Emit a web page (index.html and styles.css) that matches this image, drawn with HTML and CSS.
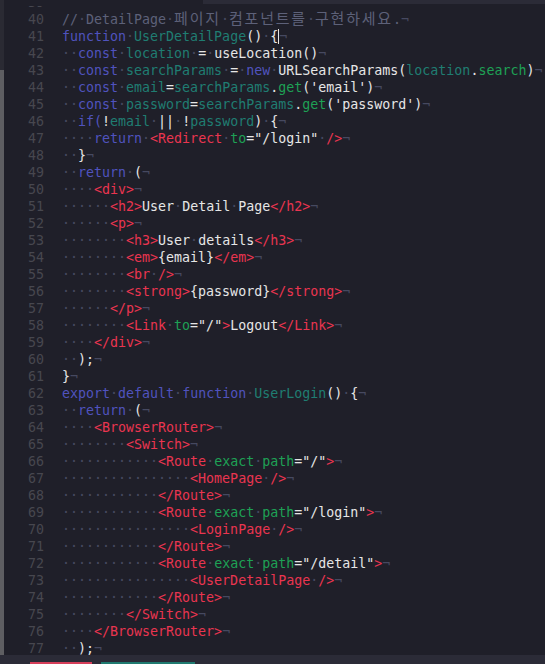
FILE: index.html
```html
<!DOCTYPE html>
<html lang="ko">
<head>
    <meta charset="UTF-8">
    <meta name="viewport" content="width=device-width, initial-scale=1.0">
    <title>UserLogin.js</title>
    <link rel="stylesheet" href="styles.css">
</head>
<body>
<div class="window">
    <div class="find-panel"></div>

    <div class="editor">
        <div class="scroll"><div class="thumb"></div></div>
        <div class="lines">
            <div class="row cut"><span class="no">39</span><span class="src"></span></div>
            <div class="row"><span class="no">40</span><span class="src"><span class="cm">//<i>·</i>DetailPage<i>·</i><span class="ko">페이지</span><i>·</i><span class="ko">컴포넌트를</span><i>·</i><span class="ko">구현하세요</span>.</span><i>¬</i></span></div>
            <div class="row"><span class="no">41</span><span class="src"><span class="kw">function</span><i>·</i><span class="fn">UserDetailPage</span>()<i>·</i>{<span class="caret"></span><i>¬</i></span></div>
            <div class="row"><span class="no">42</span><span class="src"><i>··</i><span class="kw">const</span><i>·</i><span class="fn">location</span><i>·</i>=<i>·</i>useLocation()<i>¬</i></span></div>
            <div class="row"><span class="no">43</span><span class="src"><i>··</i><span class="kw">const</span><i>·</i><span class="fn">searchParams</span><i>·</i>=<i>·</i><span class="kw">new</span><i>·</i>URLSearchParams(<span class="fn">location</span>.<span class="at">search</span>)<i>¬</i></span></div>
            <div class="row"><span class="no">44</span><span class="src"><i>··</i><span class="kw">const</span><i>·</i><span class="fn">email</span>=<span class="fn">searchParams</span>.<span class="at">get</span>('email')<i>¬</i></span></div>
            <div class="row"><span class="no">45</span><span class="src"><i>··</i><span class="kw">const</span><i>·</i><span class="fn">password</span>=<span class="fn">searchParams</span>.<span class="at">get</span>('password')<i>¬</i></span></div>
            <div class="row"><span class="no">46</span><span class="src"><i>··</i><span class="kw">if(</span>!<span class="fn">email</span><i>·</i>||<i>·</i>!<span class="fn">password</span>)<i>·</i>{<i>¬</i></span></div>
            <div class="row"><span class="no">47</span><span class="src"><i>····</i><span class="kw">return</span><i>·</i><span class="tg">&lt;Redirect</span><i>·</i><span class="at">to</span>="/login"<i>·</i><span class="tg">/&gt;</span><i>¬</i></span></div>
            <div class="row"><span class="no">48</span><span class="src"><i>··</i>}<i>¬</i></span></div>
            <div class="row"><span class="no">49</span><span class="src"><i>··</i><span class="kw">return</span><i>·</i>(<i>¬</i></span></div>
            <div class="row"><span class="no">50</span><span class="src"><i>····</i><span class="tg">&lt;div&gt;</span><i>¬</i></span></div>
            <div class="row"><span class="no">51</span><span class="src"><i>······</i><span class="tg">&lt;h2&gt;</span>User<i>·</i>Detail<i>·</i>Page<span class="tg">&lt;/h2&gt;</span><i>¬</i></span></div>
            <div class="row"><span class="no">52</span><span class="src"><i>······</i><span class="tg">&lt;p&gt;</span><i>¬</i></span></div>
            <div class="row"><span class="no">53</span><span class="src"><i>········</i><span class="tg">&lt;h3&gt;</span>User<i>·</i>details<span class="tg">&lt;/h3&gt;</span><i>¬</i></span></div>
            <div class="row"><span class="no">54</span><span class="src"><i>········</i><span class="tg">&lt;em&gt;</span>{email}<span class="tg">&lt;/em&gt;</span><i>¬</i></span></div>
            <div class="row"><span class="no">55</span><span class="src"><i>········</i><span class="tg">&lt;br</span><i>·</i><span class="tg">/&gt;</span><i>¬</i></span></div>
            <div class="row"><span class="no">56</span><span class="src"><i>········</i><span class="tg">&lt;strong&gt;</span>{password}<span class="tg">&lt;/strong&gt;</span><i>¬</i></span></div>
            <div class="row"><span class="no">57</span><span class="src"><i>······</i><span class="tg">&lt;/p&gt;</span><i>¬</i></span></div>
            <div class="row"><span class="no">58</span><span class="src"><i>········</i><span class="tg">&lt;Link</span><i>·</i><span class="at">to</span>="/"<span class="tg">&gt;</span>Logout<span class="tg">&lt;/Link&gt;</span><i>¬</i></span></div>
            <div class="row"><span class="no">59</span><span class="src"><i>····</i><span class="tg">&lt;/div&gt;</span><i>¬</i></span></div>
            <div class="row"><span class="no">60</span><span class="src"><i>··</i>);<i>¬</i></span></div>
            <div class="row"><span class="no">61</span><span class="src">}<i>¬</i></span></div>
            <div class="row"><span class="no">62</span><span class="src"><span class="kw">export</span><i>·</i><span class="kw">default</span><i>·</i><span class="kw">function</span><i>·</i><span class="fn">UserLogin</span>()<i>·</i>{<i>¬</i></span></div>
            <div class="row"><span class="no">63</span><span class="src"><i>··</i><span class="kw">return</span><i>·</i>(<i>¬</i></span></div>
            <div class="row"><span class="no">64</span><span class="src"><i>····</i><span class="tg">&lt;BrowserRouter&gt;</span><i>¬</i></span></div>
            <div class="row"><span class="no">65</span><span class="src"><i>········</i><span class="tg">&lt;Switch&gt;</span><i>¬</i></span></div>
            <div class="row"><span class="no">66</span><span class="src"><i>············</i><span class="tg">&lt;Route</span><i>·</i><span class="at">exact</span><i>·</i><span class="at">path</span>="/"<span class="tg">&gt;</span><i>¬</i></span></div>
            <div class="row"><span class="no">67</span><span class="src"><i>················</i><span class="tg">&lt;HomePage</span><i>·</i><span class="tg">/&gt;</span><i>¬</i></span></div>
            <div class="row"><span class="no">68</span><span class="src"><i>············</i><span class="tg">&lt;/Route&gt;</span><i>¬</i></span></div>
            <div class="row"><span class="no">69</span><span class="src"><i>············</i><span class="tg">&lt;Route</span><i>·</i><span class="at">exact</span><i>·</i><span class="at">path</span>="/login"<span class="tg">&gt;</span><i>¬</i></span></div>
            <div class="row"><span class="no">70</span><span class="src"><i>················</i><span class="tg">&lt;LoginPage</span><i>·</i><span class="tg">/&gt;</span><i>¬</i></span></div>
            <div class="row"><span class="no">71</span><span class="src"><i>············</i><span class="tg">&lt;/Route&gt;</span><i>¬</i></span></div>
            <div class="row"><span class="no">72</span><span class="src"><i>············</i><span class="tg">&lt;Route</span><i>·</i><span class="at">exact</span><i>·</i><span class="at">path</span>="/detail"<span class="tg">&gt;</span><i>¬</i></span></div>
            <div class="row"><span class="no">73</span><span class="src"><i>················</i><span class="tg">&lt;UserDetailPage</span><i>·</i><span class="tg">/&gt;</span><i>¬</i></span></div>
            <div class="row"><span class="no">74</span><span class="src"><i>············</i><span class="tg">&lt;/Route&gt;</span><i>¬</i></span></div>
            <div class="row"><span class="no">75</span><span class="src"><i>········</i><span class="tg">&lt;/Switch&gt;</span><i>¬</i></span></div>
            <div class="row"><span class="no">76</span><span class="src"><i>····</i><span class="tg">&lt;/BrowserRouter&gt;</span><i>¬</i></span></div>
            <div class="row"><span class="no">77</span><span class="src"><i>··</i>);<i>¬</i></span></div>
            <div class="row"><span class="no">78</span><span class="src">}<i>¬</i></span></div>
        </div>
    </div>

    <div class="tabs">
        <span class="tab tab-red"></span>
        <span class="tab tab-teal"></span>
    </div>
</div>
</body>
</html>
```

FILE: styles.css
```css
body {
    margin: 0;
    background-color: #1f1f29;
    color: #e6e6e6;
    font-family: "DejaVu Sans Mono", "Noto Sans CJK KR", monospace;
    font-size: 13.3px;
    overflow: hidden;
}
.window {
    position: relative;
    height: 664px;
    display: flex;
    flex-direction: column;
}
.find-panel {
    position: absolute;
    top: 0;
    left: 203px;
    right: 0;
    height: 4px;
    background-color: #2b2b37;
}
.editor {
    height: 655px;
    display: flex;
    overflow: hidden;
}
.scroll {
    width: 4px;
    flex-shrink: 0;
    padding-top: 70px;
    background-color: #2a2a33;
    box-sizing: border-box;
}
.thumb {
    height: 100%;
    background-color: #5e5e62;
}
.lines {
    margin-top: 6px;
}
.row {
    display: flex;
    height: 17px;
    line-height: 17px;
    white-space: pre;
}
/* only the tail of the line above the viewport shows */
.row.cut {
    height: 5px;
    align-items: flex-end;
    overflow: hidden;
}
.no {
    width: 40px;
    padding-right: 18px;
    text-align: right;
    color: #47474f;
}
.src i {
    font-style: normal;
    color: #464960;
}
.cm {
    color: #5d6179;
}
.ko {
    font-size: 15px;
    letter-spacing: 1.8px;
}
.kw {
    color: #5053be;
}
.fn {
    color: #1f7d72;
}
.at {
    color: #1ea155;
}
.tg {
    color: #ea3550;
}
.caret {
    display: inline-block;
    width: 0;
    height: 15px;
    border-left: 1px solid #e6e6e6;
    vertical-align: -3px;
}
.tabs {
    height: 9px;
    background-color: #2b2b37;
    display: flex;
    align-items: flex-end;
    gap: 9px;
    padding-left: 30px;
}
.tab {
    height: 2px;
}
.tab-red {
    width: 62px;
    background-color: #d63f5a;
}
.tab-teal {
    width: 94px;
    background-color: #1f7a70;
}
```
